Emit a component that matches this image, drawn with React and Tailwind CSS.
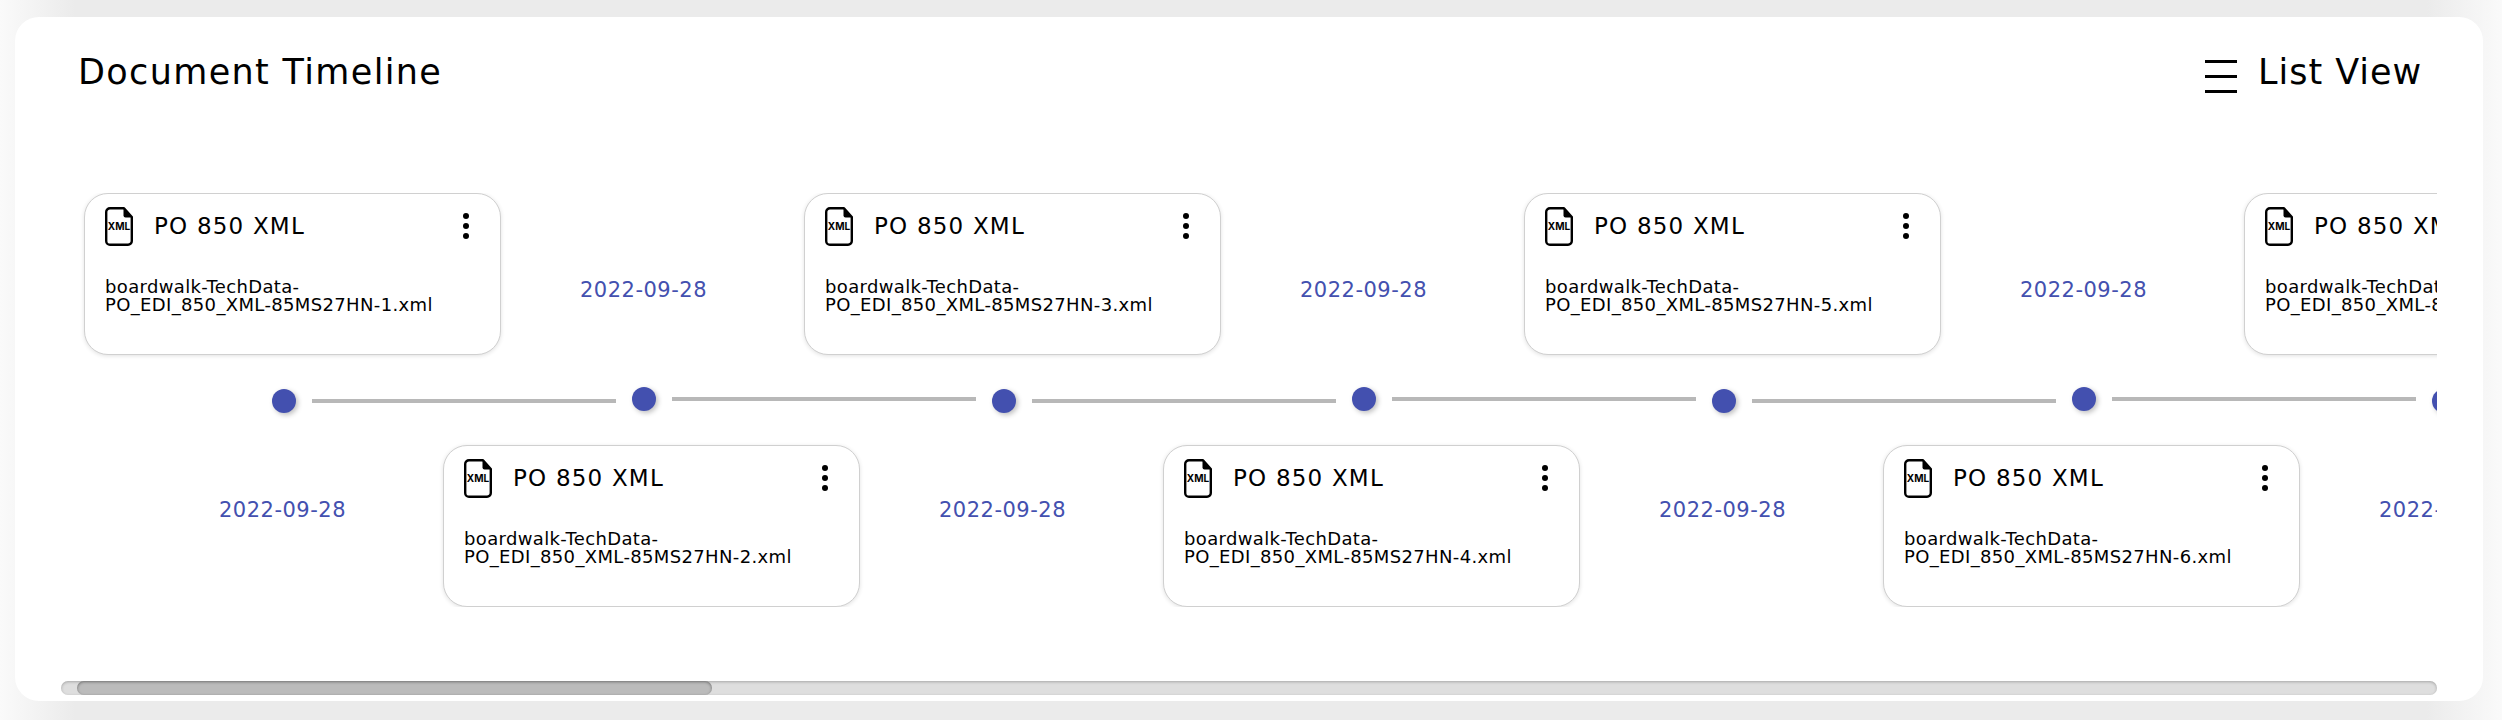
const DATE = '2022-09-28'

const XmlIcon = () => (
  <svg width="28" height="39" viewBox="0 0 28 39" className="shrink-0">
    <path d="M5 1.2H19L26.8 10V34A3.8 3.8 0 0 1 23 37.8H5A3.8 3.8 0 0 1 1.2 34V5A3.8 3.8 0 0 1 5 1.2Z" fill="#fff" stroke="#000" strokeWidth="2.4" strokeLinejoin="round" />
    <path d="M18.5 1.5L27 10.5H20.5A2 2 0 0 1 18.5 8.5Z" fill="#000" />
    <text x="14" y="23" textAnchor="middle" fontSize="10" fontWeight="700" fontFamily="Inter, sans-serif" fill="#000">XML</text>
  </svg>
)

const DocCard = ({ n }) => (
  <div className="w-[417px] h-[162px] shrink-0 rounded-[24px] border border-[#d0d0d0] bg-white shadow-[0_1px_4px_rgba(0,0,0,0.12)] pl-5 pr-[16px] pt-3">
    <div className="flex items-center h-[40px]">
      <XmlIcon />
      <span className="ml-[21px] text-[23px] tracking-[1.2px] text-black">PO 850 XML</span>
      <div className="ml-auto mr-[15px] flex flex-col gap-1">
        <span className="w-1.5 h-1.5 rounded-full bg-black" />
        <span className="w-1.5 h-1.5 rounded-full bg-black" />
        <span className="w-1.5 h-1.5 rounded-full bg-black" />
      </div>
    </div>
    <p className="mt-[32px] text-[18px] leading-[18px] tracking-[0.35px] text-black">
      boardwalk-TechData-
      <br />
      PO_EDI_850_XML-85MS27HN-{n}.xml
    </p>
  </div>
)

const DateLabel = ({ top }) => (
  <div className={`w-[303px] h-[162px] shrink-0 flex items-center justify-center pr-[18px] text-[21px] tracking-[0.5px] text-[#4350af] ${top ? 'pt-[33px]' : 'pb-[31px]'}`}>
    {DATE}
  </div>
)

const App = () => {
  const topDocs = [1, 3, 5, 7]
  const bottomDocs = [2, 4, 6, 8]
  const dots = [0, 1, 2, 3, 4, 5, 6, 7]

  return (
    <div className="h-[720px] overflow-hidden bg-[linear-gradient(90deg,#fafafa_0%,#ebebeb_3%,#ebebeb_97%,#fafafa_100%)] pt-[17px] pl-[15px] pr-[19px] font-['DejaVu_Sans',sans-serif]">
      <div className="h-[684px] rounded-[24px] bg-white px-[46px] pt-[33px]">
        {/* Header */}
        <div className="flex items-center justify-between pl-[17px] pr-[15px] h-[44px]">
          <h2 className="text-[35px] font-normal tracking-[1.35px] text-black">Document Timeline</h2>
          <div className="flex items-center gap-[21px]">
            <div className="flex flex-col gap-3 w-8 mt-2">
              <span className="h-[3px] bg-black" />
              <span className="h-[3px] bg-black" />
              <span className="h-[3px] bg-black" />
            </div>
            <span className="text-[35px] tracking-[0.95px] text-black">List View</span>
          </div>
        </div>

        {/* Timeline */}
        <div className="mt-[99px] overflow-hidden">
          <div className="flex pl-[23px]">
            {topDocs.map(n => (
              <div key={n} className="flex shrink-0">
                <DocCard n={n} />
                <DateLabel top />
              </div>
            ))}
          </div>

          <div className="flex items-center h-[28px] mt-[32px] pl-[211px]">
            {dots.map(i => (
              <div key={i} className={`flex items-center w-[360px] shrink-0 ${i % 2 ? 'mb-1' : ''}`}>
                <span className="w-6 h-6 shrink-0 rounded-full bg-[#4350af] shadow-[2px_2px_5px_rgba(0,0,0,0.25)]" />
                <span className="ml-4 w-[304px] h-1 bg-[#b8b8b8]" />
              </div>
            ))}
          </div>

          <div className="flex pl-[79px] mt-[30px]">
            {bottomDocs.map(n => (
              <div key={n} className="flex shrink-0">
                <DateLabel />
                <DocCard n={n} />
              </div>
            ))}
          </div>
        </div>

        {/* Scrollbar */}
        <div className="mt-[74px] h-3.5 rounded-full bg-[#dedede] shadow-[inset_0_1px_3px_rgba(0,0,0,0.25)] pl-4">
          <div className="w-[635px] h-full rounded-full bg-[#bbbbbb] shadow-[inset_0_1px_3px_rgba(0,0,0,0.4)]" />
        </div>
      </div>
    </div>
  )
}

export default App
